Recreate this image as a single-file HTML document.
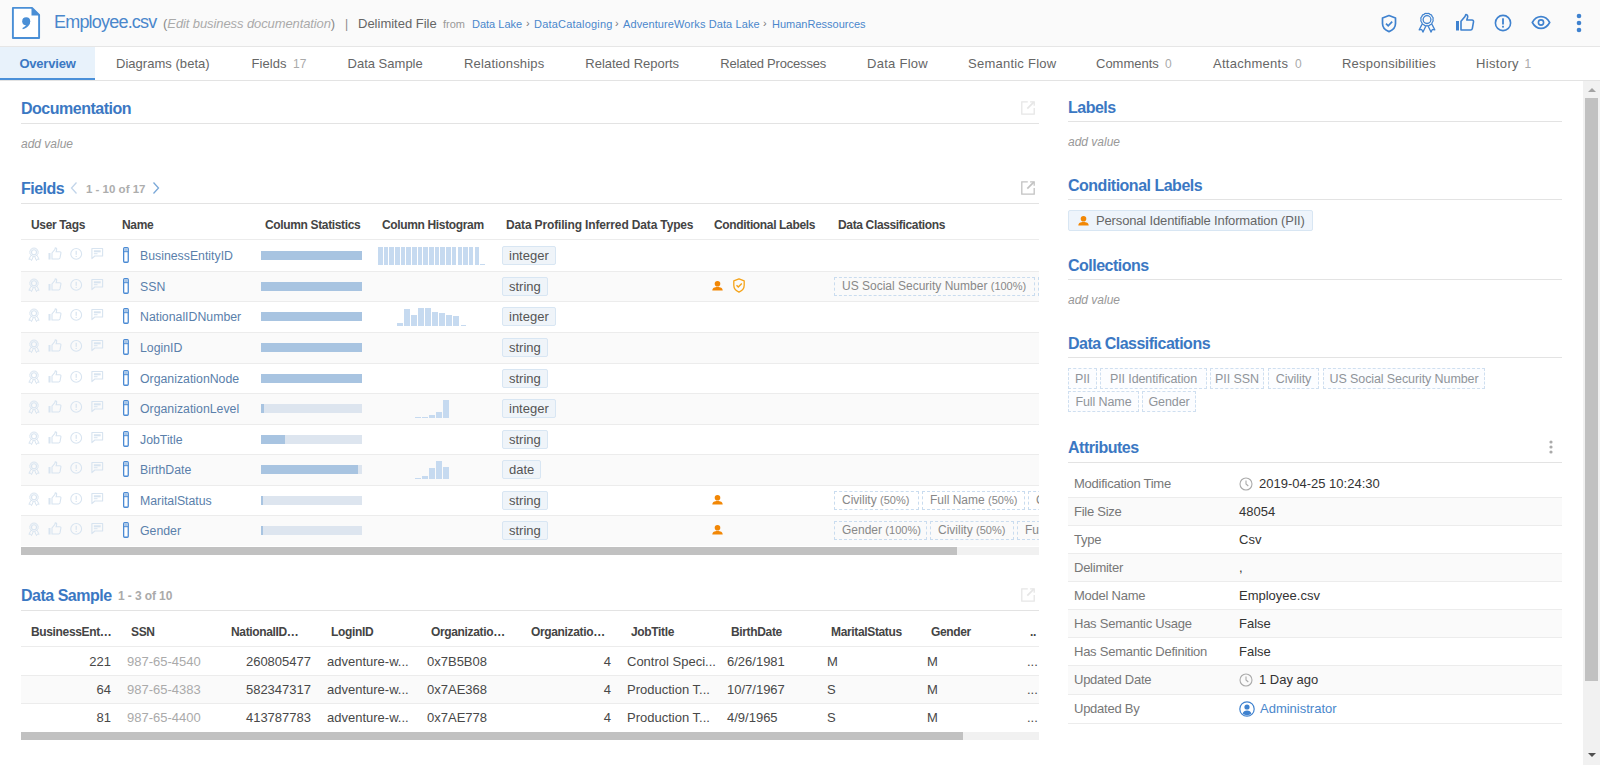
<!DOCTYPE html><html><head><meta charset="utf-8"><style>
html,body{margin:0;padding:0}
body{width:1600px;height:765px;overflow:hidden;position:relative;background:#fff;font-family:"Liberation Sans",sans-serif;color:#555}
.a{position:absolute;white-space:nowrap}
#hdr{position:absolute;left:0;top:0;width:1600px;height:46px;background:#fafafa;border-bottom:1px solid #e6e6e6}
#tabs{position:absolute;left:0;top:47px;width:1600px;height:33px;border-bottom:1px solid #e3e3e3;background:#fff}
.tab{position:absolute;top:0;height:33px;line-height:33px;font-size:13px;color:#666}
.tab .n{color:#aaa;margin-left:5px;font-size:12px}
.h2{position:absolute;font-weight:bold;font-size:16px;color:#3b78c3;letter-spacing:-0.5px;white-space:nowrap;line-height:18px}
.sep{position:absolute;height:1px;background:#e3e3e3}
.add{position:absolute;font-style:italic;font-size:12px;color:#999;line-height:14px}
.th{position:absolute;font-weight:bold;font-size:12px;color:#444;letter-spacing:-0.35px;white-space:nowrap;line-height:14px}
.row{position:absolute;left:21px;width:1018px;border-top:1px solid #ececec;box-sizing:border-box}
.g{background:#fafafa}
.nm{position:absolute;left:119px;font-size:12.3px;color:#5a80ab;line-height:14px}
.bar{position:absolute;left:240px;width:101px;height:9px;background:#dde5ef}
.bar i{position:absolute;left:0;top:0;height:9px;background:#a8c4e1}
.hb{position:absolute;background:#c6daf0}
.tp{position:absolute;left:481px;height:17px;line-height:17px;padding:0 6px;border:1px solid #d8e6f3;border-radius:2px;background:#eff4f9;font-size:13px;color:#555}
.dc{position:absolute;height:19px;line-height:17px;border:1px dashed #c9dcef;font-size:12px;color:#888;padding:0 0 0 7px;box-sizing:border-box;overflow:hidden}
.dc s{text-decoration:none;font-size:11px}
.ic{position:absolute}
.ds{position:absolute;font-size:13px;color:#484848;line-height:15px}
.dh{position:absolute;font-weight:bold;font-size:12px;color:#444;letter-spacing:-0.35px;line-height:14px}
.at{position:absolute;left:1068px;width:494px;border-bottom:1px solid #ececec;box-sizing:border-box}
.al{position:absolute;left:7px;font-size:13px;color:#777}
.av{position:absolute;left:171px;font-size:13px;color:#333}
.rb{position:absolute;height:20.5px;line-height:20px;border:1px dashed #cfdff0;background:#fcfdff;font-size:12.5px;color:#8f949a;padding:0;box-sizing:border-box;text-align:center;letter-spacing:-0.1px}
</style></head><body>
<div id="hdr">
  <svg class="a" style="left:11px;top:6px" width="31" height="35" viewBox="0 0 31 35">
    <path d="M1.9 1.9 H21 L28.1 9 V32 H1.9 Z" fill="#fff" stroke="#4a8fd6" stroke-width="1.9" stroke-linejoin="round"/>
    <path d="M20.5 1 L29 9.5 H20.5 Z" fill="#4a8fd6"/>
    <circle cx="15.2" cy="15.3" r="4" fill="#4a8fd6"/>
    <path d="M19.1 15.3 C19.1 19.6 16.2 22 11.8 23.2 L11.4 22.1 C14 21 15.3 19.5 15.5 17.6 Z" fill="#4a8fd6"/>
  </svg>
  <div class="a" style="left:54px;top:12px;font-size:18px;line-height:20px;color:#4a87cc;letter-spacing:-0.8px">Employee.csv</div>
  <div class="a" style="left:163px;top:16px;font-size:13px;line-height:16px;color:#888">(<i style="color:#aaa;letter-spacing:-0.1px">Edit business documentation</i>)</div>
  <div class="a" style="left:345px;top:16px;font-size:12px;line-height:16px;color:#888">|</div>
  <div class="a" style="left:358px;top:16px;font-size:13px;line-height:16px;color:#666">Delimited File</div>
  <div class="a" style="left:443px;top:17px;font-size:11px;line-height:14px;color:#999">from</div>
  <div class="a" style="left:472px;top:17px;font-size:11px;line-height:14px;color:#4a87cc">Data Lake</div>
  <div class="a" style="left:526px;top:16px;font-size:11px;line-height:14px;color:#777">›</div>
  <div class="a" style="left:534px;top:17px;font-size:11px;line-height:14px;color:#4a87cc;letter-spacing:0.2px">DataCataloging</div>
  <div class="a" style="left:615px;top:16px;font-size:11px;line-height:14px;color:#777">›</div>
  <div class="a" style="left:623px;top:17px;font-size:11px;line-height:14px;color:#4a87cc;letter-spacing:0.1px">AdventureWorks Data Lake</div>
  <div class="a" style="left:763px;top:16px;font-size:11px;line-height:14px;color:#777">›</div>
  <div class="a" style="left:772px;top:17px;font-size:11px;line-height:14px;color:#4a87cc">HumanRessources</div>


  <svg class="a" style="left:1380px;top:14px" width="18" height="19" viewBox="0 0 18 19"><path d="M9 1.5 L15.5 4 V9.5 C15.5 13.5 12.5 16.3 9 17.6 C5.5 16.3 2.5 13.5 2.5 9.5 V4 Z" fill="none" stroke="#3f82cf" stroke-width="1.7" stroke-linejoin="round"/><path d="M6 9.6 L8.2 11.8 L12.2 7.6" fill="none" stroke="#3f82cf" stroke-width="1.7"/></svg>
  <svg class="a" style="left:1418px;top:12px" width="18" height="22" viewBox="0 0 18 22"><path d="M9.00 1.60 Q10.81 0.84 12.00 2.40 Q13.95 2.65 14.20 4.60 Q15.76 5.79 15.00 7.60 Q15.76 9.41 14.20 10.60 Q13.95 12.55 12.00 12.80 Q10.81 14.36 9.00 13.60 Q7.19 14.36 6.00 12.80 Q4.05 12.55 3.80 10.60 Q2.24 9.41 3.00 7.60 Q2.24 5.79 3.80 4.60 Q4.05 2.65 6.00 2.40 Q7.19 0.84 9.00 1.60Z" fill="none" stroke="#3f82cf" stroke-width="1.25" stroke-linejoin="round"/><circle cx="9" cy="7.6" r="3.9" fill="none" stroke="#3f82cf" stroke-width="1.3"/><path d="M4 12.4 L1.2 17.9 L3.7 17.5 L4.9 20.1 L7.8 14.2 M14 12.4 L16.8 17.9 L14.3 17.5 L13.1 20.1 L10.2 14.2" fill="none" stroke="#3f82cf" stroke-width="1.25" stroke-linejoin="round"/></svg>
  <svg class="a" style="left:1455px;top:13px" width="20" height="19" viewBox="0 0 20 19"><rect x="1" y="8" width="3" height="9.5" fill="#3f82cf"/><path d="M6 17 V8.3 L10 3.5 L10.8 1.5 C12.3 1.5 13 2.8 12.6 4.3 L11.8 7 H17 C18 7 18.7 7.9 18.5 8.9 L17.3 15.6 C17.1 16.5 16.4 17 15.6 17 Z" fill="none" stroke="#3f82cf" stroke-width="1.6" stroke-linejoin="round"/></svg>
  <svg class="a" style="left:1494px;top:14px" width="18" height="18" viewBox="0 0 18 18"><circle cx="9" cy="9" r="7.6" fill="none" stroke="#3f82cf" stroke-width="1.6"/><rect x="8.1" y="4.3" width="1.8" height="6.2" fill="#3f82cf"/><rect x="8.1" y="11.8" width="1.8" height="1.8" fill="#3f82cf"/></svg>
  <svg class="a" style="left:1531px;top:15px" width="20" height="15" viewBox="0 0 20 15"><path d="M1.3 7.5 C3.5 3.5 6.5 1.6 10 1.6 C13.5 1.6 16.5 3.5 18.7 7.5 C16.5 11.5 13.5 13.4 10 13.4 C6.5 13.4 3.5 11.5 1.3 7.5 Z" fill="none" stroke="#3f82cf" stroke-width="1.6"/><circle cx="10" cy="7.5" r="2.6" fill="none" stroke="#3f82cf" stroke-width="1.6"/></svg>
  <svg class="a" style="left:1575px;top:13px" width="8" height="20" viewBox="0 0 8 20"><circle cx="4" cy="3" r="2.3" fill="#3f82cf"/><circle cx="4" cy="10" r="2.3" fill="#3f82cf"/><circle cx="4" cy="17" r="2.3" fill="#3f82cf"/></svg>
</div>
<div id="tabs"><div class="tab" style="left:0;width:95px;background:#e8f2fb;border-bottom:2px solid #4a90d9;height:31px;line-height:33px;text-align:center;font-weight:bold;color:#3b78c3;letter-spacing:-0.2px">Overview</div>
<div class="tab" style="left:116px;letter-spacing:0.03px">Diagrams (beta)</div>
<div class="tab" style="left:251.5px;letter-spacing:0.05px">Fields</div>
<div class="tab n" style="left:293px;top:1px;color:#aaa;font-size:12px">17</div>
<div class="tab" style="left:347.5px;letter-spacing:0.01px">Data Sample</div>
<div class="tab" style="left:464px;letter-spacing:0.18px">Relationships</div>
<div class="tab" style="left:585.3px;letter-spacing:-0.01px">Related Reports</div>
<div class="tab" style="left:720.3px;letter-spacing:-0.2px">Related Processes</div>
<div class="tab" style="left:867px;letter-spacing:0.28px">Data Flow</div>
<div class="tab" style="left:968px;letter-spacing:0.24px">Semantic Flow</div>
<div class="tab" style="left:1096px;letter-spacing:0px">Comments</div>
<div class="tab n" style="left:1165px;top:1px;color:#aaa;font-size:12px">0</div>
<div class="tab" style="left:1213px;letter-spacing:0.27px">Attachments</div>
<div class="tab n" style="left:1295px;top:1px;color:#aaa;font-size:12px">0</div>
<div class="tab" style="left:1342px;letter-spacing:0.23px">Responsibilities</div>
<div class="tab" style="left:1476px;letter-spacing:0.36px">History</div>
<div class="tab n" style="left:1524.5px;top:1px;color:#aaa;font-size:12px">1</div>
</div>
<div class="h2" style="left:21px;top:100px">Documentation</div>
<svg class="a" style="left:1020px;top:100px" width="16" height="16" viewBox="0 0 16 16"><path d="M7.8 1.8 H1.8 V14.1 H14.2 V8.1" fill="none" stroke="#e6e6e6" stroke-width="1.3"/><path d="M10.1 1.8 H14.2 V5.7" fill="none" stroke="#e6e6e6" stroke-width="1.3"/><path d="M7.3 8.6 L13.8 2.1" fill="none" stroke="#e6e6e6" stroke-width="1.7"/></svg>
<div class="sep" style="left:21px;top:123px;width:1018px"></div>
<div class="add" style="left:21px;top:136.5px">add value</div>
<div class="h2" style="left:21px;top:179.5px">Fields</div>
<svg class="a" style="left:69px;top:181px" width="10" height="14" viewBox="0 0 10 14"><path d="M7.5 1.5 L2.5 7 L7.5 12.5" fill="none" stroke="#c2d5ea" stroke-width="1.3"/></svg>
<div class="a" style="left:86px;top:183px;font-size:11.5px;line-height:13px;font-weight:bold;color:#adadad;letter-spacing:0px">1 - 10 of 17</div>
<svg class="a" style="left:151px;top:181px" width="10" height="14" viewBox="0 0 10 14"><path d="M2.5 1.5 L7.5 7 L2.5 12.5" fill="none" stroke="#7aa8d8" stroke-width="1.3"/></svg>
<svg class="a" style="left:1020px;top:180px" width="16" height="16" viewBox="0 0 16 16"><path d="M7.8 1.8 H1.8 V14.1 H14.2 V8.1" fill="none" stroke="#c2c2c2" stroke-width="1.3"/><path d="M10.1 1.8 H14.2 V5.7" fill="none" stroke="#c2c2c2" stroke-width="1.3"/><path d="M7.3 8.6 L13.8 2.1" fill="none" stroke="#c2c2c2" stroke-width="1.7"/></svg>
<div class="sep" style="left:21px;top:203px;width:1018px"></div>
<div class="th" style="left:31px;top:218px">User Tags</div>
<div class="th" style="left:122px;top:218px">Name</div>
<div class="th" style="left:265px;top:218px">Column Statistics</div>
<div class="th" style="left:382px;top:218px">Column Histogram</div>
<div class="th" style="left:506px;top:218px"><span style="letter-spacing:-0.15px">Data Profiling Inferred Data Types</span></div>
<div class="th" style="left:714px;top:218px">Conditional Labels</div>
<div class="th" style="left:838px;top:218px">Data Classifications</div>
<div class="a" style="left:21px;top:239px;width:1018px;height:316px;overflow:hidden">
<div class="row" style="left:0;top:0px;height:32px">
</div>

<div class="nm" style="top:10.0px">BusinessEntityID</div>
<div class="bar" style="top:12.0px"><i style="width:101px"></i></div>
<div class="hb" style="left:357.00px;top:8.0px;width:4.5px;height:18px"></div>
<div class="hb" style="left:362.68px;top:8.0px;width:4.5px;height:18px"></div>
<div class="hb" style="left:368.36px;top:8.0px;width:4.5px;height:18px"></div>
<div class="hb" style="left:374.04px;top:8.0px;width:4.5px;height:18px"></div>
<div class="hb" style="left:379.72px;top:8.0px;width:4.5px;height:18px"></div>
<div class="hb" style="left:385.40px;top:8.0px;width:4.5px;height:18px"></div>
<div class="hb" style="left:391.08px;top:8.0px;width:4.5px;height:18px"></div>
<div class="hb" style="left:396.76px;top:8.0px;width:4.5px;height:18px"></div>
<div class="hb" style="left:402.44px;top:8.0px;width:4.5px;height:18px"></div>
<div class="hb" style="left:408.12px;top:8.0px;width:4.5px;height:18px"></div>
<div class="hb" style="left:413.80px;top:8.0px;width:4.5px;height:18px"></div>
<div class="hb" style="left:419.48px;top:8.0px;width:4.5px;height:18px"></div>
<div class="hb" style="left:425.16px;top:8.0px;width:4.5px;height:18px"></div>
<div class="hb" style="left:430.84px;top:8.0px;width:4.5px;height:18px"></div>
<div class="hb" style="left:436.52px;top:8.0px;width:4.5px;height:18px"></div>
<div class="hb" style="left:442.20px;top:8.0px;width:4.5px;height:18px"></div>
<div class="hb" style="left:447.88px;top:8.0px;width:4.5px;height:18px"></div>
<div class="hb" style="left:453.56px;top:8.0px;width:4.5px;height:18px"></div>
<div class="hb" style="left:459.24px;top:24.5px;width:5px;height:1.5px"></div>
<div class="tp" style="top:7.0px">integer</div>
<div class="row g" style="left:0;top:32px;height:30px">
</div>

<div class="nm" style="top:40.5px">SSN</div>
<div class="bar" style="top:42.5px"><i style="width:101px"></i></div>
<div class="tp" style="top:37.5px">string</div>
<svg class="a" style="left:691px;top:41.5px" width="11" height="10" viewBox="0 0 11 10"><circle cx="5.5" cy="2.8" r="2.8" fill="#f28705"/><path d="M0.3 9.5 C0.3 6.8 2.5 5.9 5.5 5.9 C8.5 5.9 10.7 6.8 10.7 9.5 Z" fill="#f28705"/></svg>
<svg class="a" style="left:712px;top:39.0px" width="12" height="15" viewBox="0 0 12 15"><path d="M6 0.8 L11.2 2.8 V7.3 C11.2 10.6 8.9 12.9 6 14.2 C3.1 12.9 0.8 10.6 0.8 7.3 V2.8 Z" fill="none" stroke="#f5a318" stroke-width="1.3" stroke-linejoin="round"/><path d="M3.5 7.3 L5.3 9.1 L8.8 5.4" fill="none" stroke="#f5a318" stroke-width="1.4"/></svg>
<div class="dc" style="left:813px;top:37.5px;width:201px">US Social Security Number <s>(100%)</s></div>
<div class="dc" style="left:1017px;top:37.5px;width:82px">PII SSN <s>(100%)</s></div>
<div class="row" style="left:0;top:62px;height:31px">
</div>

<div class="nm" style="top:71.0px">NationalIDNumber</div>
<div class="bar" style="top:73.0px"><i style="width:101px"></i></div>
<div class="hb" style="left:376.00px;top:84.3px;width:5.9px;height:2.7px"></div>
<div class="hb" style="left:383.06px;top:70.3px;width:5.9px;height:16.7px"></div>
<div class="hb" style="left:390.12px;top:76.2px;width:5.9px;height:10.8px"></div>
<div class="hb" style="left:397.18px;top:69.3px;width:5.9px;height:17.7px"></div>
<div class="hb" style="left:404.24px;top:69.3px;width:5.9px;height:17.7px"></div>
<div class="hb" style="left:411.30px;top:73.2px;width:5.9px;height:13.8px"></div>
<div class="hb" style="left:418.36px;top:74.2px;width:5.9px;height:12.8px"></div>
<div class="hb" style="left:425.42px;top:76.2px;width:5.9px;height:10.8px"></div>
<div class="hb" style="left:432.48px;top:77.2px;width:5.9px;height:9.75px"></div>
<div class="hb" style="left:439.54px;top:86.0px;width:5.9px;height:1px"></div>
<div class="tp" style="top:68.0px">integer</div>
<div class="row g" style="left:0;top:93px;height:31px">
</div>

<div class="nm" style="top:102.0px">LoginID</div>
<div class="bar" style="top:104.0px"><i style="width:101px"></i></div>
<div class="tp" style="top:99.0px">string</div>
<div class="row" style="left:0;top:124px;height:30px">
</div>

<div class="nm" style="top:132.5px">OrganizationNode</div>
<div class="bar" style="top:134.5px"><i style="width:101px"></i></div>
<div class="tp" style="top:129.5px">string</div>
<div class="row g" style="left:0;top:154px;height:31px">
</div>

<div class="nm" style="top:163.0px">OrganizationLevel</div>
<div class="bar" style="top:165.0px"><i style="width:3px"></i></div>
<div class="hb" style="left:394.00px;top:178.0px;width:5.9px;height:1px"></div>
<div class="hb" style="left:401.00px;top:178.0px;width:5.9px;height:1px"></div>
<div class="hb" style="left:408.00px;top:176.0px;width:5.9px;height:3px"></div>
<div class="hb" style="left:415.00px;top:173.0px;width:5.9px;height:6px"></div>
<div class="hb" style="left:422.00px;top:161.0px;width:5.9px;height:18px"></div>
<div class="tp" style="top:160.0px">integer</div>
<div class="row" style="left:0;top:185px;height:30px">
</div>

<div class="nm" style="top:193.5px">JobTitle</div>
<div class="bar" style="top:195.5px"><i style="width:24px"></i></div>
<div class="tp" style="top:190.5px">string</div>
<div class="row g" style="left:0;top:215px;height:31px">
</div>

<div class="nm" style="top:224.0px">BirthDate</div>
<div class="bar" style="top:226.0px"><i style="width:97px"></i></div>
<div class="hb" style="left:394.00px;top:239.0px;width:5.9px;height:1px"></div>
<div class="hb" style="left:401.00px;top:237.0px;width:5.9px;height:3px"></div>
<div class="hb" style="left:408.00px;top:229.0px;width:5.9px;height:11px"></div>
<div class="hb" style="left:415.00px;top:222.0px;width:5.9px;height:18px"></div>
<div class="hb" style="left:422.00px;top:228.0px;width:5.9px;height:12px"></div>
<div class="tp" style="top:221.0px">date</div>
<div class="row" style="left:0;top:246px;height:30px">
</div>

<div class="nm" style="top:254.5px">MaritalStatus</div>
<div class="bar" style="top:256.5px"><i style="width:2px"></i></div>
<div class="tp" style="top:251.5px">string</div>
<svg class="a" style="left:691px;top:255.5px" width="11" height="10" viewBox="0 0 11 10"><circle cx="5.5" cy="2.8" r="2.8" fill="#f28705"/><path d="M0.3 9.5 C0.3 6.8 2.5 5.9 5.5 5.9 C8.5 5.9 10.7 6.8 10.7 9.5 Z" fill="#f28705"/></svg>
<div class="dc" style="left:813px;top:251.5px;width:85px">Civility <s>(50%)</s></div>
<div class="dc" style="left:901px;top:251.5px;width:103px">Full Name <s>(50%)</s></div>
<div class="dc" style="left:1007px;top:251.5px;width:85px">Civility <s>(50%)</s></div>
<div class="row g" style="left:0;top:276px;height:31px">
</div>

<div class="nm" style="top:285.0px">Gender</div>
<div class="bar" style="top:287.0px"><i style="width:2px"></i></div>
<div class="tp" style="top:282.0px">string</div>
<svg class="a" style="left:691px;top:286.0px" width="11" height="10" viewBox="0 0 11 10"><circle cx="5.5" cy="2.8" r="2.8" fill="#f28705"/><path d="M0.3 9.5 C0.3 6.8 2.5 5.9 5.5 5.9 C8.5 5.9 10.7 6.8 10.7 9.5 Z" fill="#f28705"/></svg>
<div class="dc" style="left:813px;top:282.0px;width:93px">Gender <s>(100%)</s></div>
<div class="dc" style="left:909px;top:282.0px;width:84px">Civility <s>(50%)</s></div>
<div class="dc" style="left:996px;top:282.0px;width:103px">Full Name <s>(50%)</s></div>
</div>
<svg class="a" style="left:28px;top:247.1px" width="12" height="14" viewBox="0 0 12 14"><path d="M6.00 1.20 Q7.22 0.66 8.00 1.74 Q9.32 1.88 9.46 3.20 Q10.54 3.98 10.00 5.20 Q10.54 6.42 9.46 7.20 Q9.32 8.52 8.00 8.66 Q7.22 9.74 6.00 9.20 Q4.78 9.74 4.00 8.66 Q2.68 8.52 2.54 7.20 Q1.46 6.42 2.00 5.20 Q1.46 3.98 2.54 3.20 Q2.68 1.88 4.00 1.74 Q4.78 0.66 6.00 1.20Z" fill="none" stroke="#d8e4f0" stroke-width="1"/><circle cx="6" cy="5.2" r="2.5" fill="none" stroke="#d8e4f0" stroke-width="1.1"/><path d="M2.9 8.4 L0.9 12.3 L2.6 12 L3.5 13.6 L5.3 9.6 M9.1 8.4 L11.1 12.3 L9.4 12 L8.5 13.6 L6.7 9.6" fill="none" stroke="#d8e4f0" stroke-width="1" stroke-linejoin="round"/></svg><svg class="a" style="left:48px;top:247.1px" width="14" height="13" viewBox="0 0 14 13"><rect x="0.5" y="6" width="2" height="6.5" fill="#d8e4f0"/><path d="M4 12 V6 L6.8 2.6 L7.3 0.8 C8.4 0.8 8.9 1.7 8.6 2.8 L8.1 4.8 H11.8 C12.6 4.8 13.1 5.4 12.9 6.2 L12 10.9 C11.8 11.6 11.3 12 10.7 12 Z" fill="none" stroke="#d8e4f0" stroke-width="1.1"/></svg><svg class="a" style="left:70px;top:247.1px" width="13" height="13" viewBox="0 0 13 13"><circle cx="6.2" cy="6.9" r="5.4" fill="none" stroke="#d8e4f0" stroke-width="1.1"/><rect x="5.6" y="3.8" width="1.2" height="4" fill="#d8e4f0"/><rect x="5.6" y="8.9" width="1.2" height="1.1" fill="#d8e4f0"/></svg><svg class="a" style="left:91px;top:247.1px" width="13" height="13" viewBox="0 0 13 13"><path d="M0.9 1.5 H11.6 V9 H3.8 L0.9 11.6 Z" fill="none" stroke="#d8e4f0" stroke-width="1.1" stroke-linejoin="round"/><rect x="2.9" y="3.3" width="6.8" height="2" fill="#d8e4f0"/><rect x="2.9" y="6.2" width="3.6" height="1" fill="#d8e4f0"/></svg>
<svg class="a" style="left:123px;top:247.0px" width="7" height="17" viewBox="0 0 7 17"><rect x="0.65" y="0.65" width="4.6" height="14.6" rx="1" fill="#fff" stroke="#4a8ad4" stroke-width="1.3"/><rect x="1.2" y="1.2" width="3.5" height="3.1" fill="#a9c6e6"/><path d="M0.65 4.7 H5.25" stroke="#4a8ad4" stroke-width="1"/></svg>
<svg class="a" style="left:28px;top:277.6px" width="12" height="14" viewBox="0 0 12 14"><path d="M6.00 1.20 Q7.22 0.66 8.00 1.74 Q9.32 1.88 9.46 3.20 Q10.54 3.98 10.00 5.20 Q10.54 6.42 9.46 7.20 Q9.32 8.52 8.00 8.66 Q7.22 9.74 6.00 9.20 Q4.78 9.74 4.00 8.66 Q2.68 8.52 2.54 7.20 Q1.46 6.42 2.00 5.20 Q1.46 3.98 2.54 3.20 Q2.68 1.88 4.00 1.74 Q4.78 0.66 6.00 1.20Z" fill="none" stroke="#d8e4f0" stroke-width="1"/><circle cx="6" cy="5.2" r="2.5" fill="none" stroke="#d8e4f0" stroke-width="1.1"/><path d="M2.9 8.4 L0.9 12.3 L2.6 12 L3.5 13.6 L5.3 9.6 M9.1 8.4 L11.1 12.3 L9.4 12 L8.5 13.6 L6.7 9.6" fill="none" stroke="#d8e4f0" stroke-width="1" stroke-linejoin="round"/></svg><svg class="a" style="left:48px;top:277.6px" width="14" height="13" viewBox="0 0 14 13"><rect x="0.5" y="6" width="2" height="6.5" fill="#d8e4f0"/><path d="M4 12 V6 L6.8 2.6 L7.3 0.8 C8.4 0.8 8.9 1.7 8.6 2.8 L8.1 4.8 H11.8 C12.6 4.8 13.1 5.4 12.9 6.2 L12 10.9 C11.8 11.6 11.3 12 10.7 12 Z" fill="none" stroke="#d8e4f0" stroke-width="1.1"/></svg><svg class="a" style="left:70px;top:277.6px" width="13" height="13" viewBox="0 0 13 13"><circle cx="6.2" cy="6.9" r="5.4" fill="none" stroke="#d8e4f0" stroke-width="1.1"/><rect x="5.6" y="3.8" width="1.2" height="4" fill="#d8e4f0"/><rect x="5.6" y="8.9" width="1.2" height="1.1" fill="#d8e4f0"/></svg><svg class="a" style="left:91px;top:277.6px" width="13" height="13" viewBox="0 0 13 13"><path d="M0.9 1.5 H11.6 V9 H3.8 L0.9 11.6 Z" fill="none" stroke="#d8e4f0" stroke-width="1.1" stroke-linejoin="round"/><rect x="2.9" y="3.3" width="6.8" height="2" fill="#d8e4f0"/><rect x="2.9" y="6.2" width="3.6" height="1" fill="#d8e4f0"/></svg>
<svg class="a" style="left:123px;top:277.5px" width="7" height="17" viewBox="0 0 7 17"><rect x="0.65" y="0.65" width="4.6" height="14.6" rx="1" fill="#fff" stroke="#4a8ad4" stroke-width="1.3"/><rect x="1.2" y="1.2" width="3.5" height="3.1" fill="#a9c6e6"/><path d="M0.65 4.7 H5.25" stroke="#4a8ad4" stroke-width="1"/></svg>
<svg class="a" style="left:28px;top:308.1px" width="12" height="14" viewBox="0 0 12 14"><path d="M6.00 1.20 Q7.22 0.66 8.00 1.74 Q9.32 1.88 9.46 3.20 Q10.54 3.98 10.00 5.20 Q10.54 6.42 9.46 7.20 Q9.32 8.52 8.00 8.66 Q7.22 9.74 6.00 9.20 Q4.78 9.74 4.00 8.66 Q2.68 8.52 2.54 7.20 Q1.46 6.42 2.00 5.20 Q1.46 3.98 2.54 3.20 Q2.68 1.88 4.00 1.74 Q4.78 0.66 6.00 1.20Z" fill="none" stroke="#d8e4f0" stroke-width="1"/><circle cx="6" cy="5.2" r="2.5" fill="none" stroke="#d8e4f0" stroke-width="1.1"/><path d="M2.9 8.4 L0.9 12.3 L2.6 12 L3.5 13.6 L5.3 9.6 M9.1 8.4 L11.1 12.3 L9.4 12 L8.5 13.6 L6.7 9.6" fill="none" stroke="#d8e4f0" stroke-width="1" stroke-linejoin="round"/></svg><svg class="a" style="left:48px;top:308.1px" width="14" height="13" viewBox="0 0 14 13"><rect x="0.5" y="6" width="2" height="6.5" fill="#d8e4f0"/><path d="M4 12 V6 L6.8 2.6 L7.3 0.8 C8.4 0.8 8.9 1.7 8.6 2.8 L8.1 4.8 H11.8 C12.6 4.8 13.1 5.4 12.9 6.2 L12 10.9 C11.8 11.6 11.3 12 10.7 12 Z" fill="none" stroke="#d8e4f0" stroke-width="1.1"/></svg><svg class="a" style="left:70px;top:308.1px" width="13" height="13" viewBox="0 0 13 13"><circle cx="6.2" cy="6.9" r="5.4" fill="none" stroke="#d8e4f0" stroke-width="1.1"/><rect x="5.6" y="3.8" width="1.2" height="4" fill="#d8e4f0"/><rect x="5.6" y="8.9" width="1.2" height="1.1" fill="#d8e4f0"/></svg><svg class="a" style="left:91px;top:308.1px" width="13" height="13" viewBox="0 0 13 13"><path d="M0.9 1.5 H11.6 V9 H3.8 L0.9 11.6 Z" fill="none" stroke="#d8e4f0" stroke-width="1.1" stroke-linejoin="round"/><rect x="2.9" y="3.3" width="6.8" height="2" fill="#d8e4f0"/><rect x="2.9" y="6.2" width="3.6" height="1" fill="#d8e4f0"/></svg>
<svg class="a" style="left:123px;top:308.0px" width="7" height="17" viewBox="0 0 7 17"><rect x="0.65" y="0.65" width="4.6" height="14.6" rx="1" fill="#fff" stroke="#4a8ad4" stroke-width="1.3"/><rect x="1.2" y="1.2" width="3.5" height="3.1" fill="#a9c6e6"/><path d="M0.65 4.7 H5.25" stroke="#4a8ad4" stroke-width="1"/></svg>
<svg class="a" style="left:28px;top:339.1px" width="12" height="14" viewBox="0 0 12 14"><path d="M6.00 1.20 Q7.22 0.66 8.00 1.74 Q9.32 1.88 9.46 3.20 Q10.54 3.98 10.00 5.20 Q10.54 6.42 9.46 7.20 Q9.32 8.52 8.00 8.66 Q7.22 9.74 6.00 9.20 Q4.78 9.74 4.00 8.66 Q2.68 8.52 2.54 7.20 Q1.46 6.42 2.00 5.20 Q1.46 3.98 2.54 3.20 Q2.68 1.88 4.00 1.74 Q4.78 0.66 6.00 1.20Z" fill="none" stroke="#d8e4f0" stroke-width="1"/><circle cx="6" cy="5.2" r="2.5" fill="none" stroke="#d8e4f0" stroke-width="1.1"/><path d="M2.9 8.4 L0.9 12.3 L2.6 12 L3.5 13.6 L5.3 9.6 M9.1 8.4 L11.1 12.3 L9.4 12 L8.5 13.6 L6.7 9.6" fill="none" stroke="#d8e4f0" stroke-width="1" stroke-linejoin="round"/></svg><svg class="a" style="left:48px;top:339.1px" width="14" height="13" viewBox="0 0 14 13"><rect x="0.5" y="6" width="2" height="6.5" fill="#d8e4f0"/><path d="M4 12 V6 L6.8 2.6 L7.3 0.8 C8.4 0.8 8.9 1.7 8.6 2.8 L8.1 4.8 H11.8 C12.6 4.8 13.1 5.4 12.9 6.2 L12 10.9 C11.8 11.6 11.3 12 10.7 12 Z" fill="none" stroke="#d8e4f0" stroke-width="1.1"/></svg><svg class="a" style="left:70px;top:339.1px" width="13" height="13" viewBox="0 0 13 13"><circle cx="6.2" cy="6.9" r="5.4" fill="none" stroke="#d8e4f0" stroke-width="1.1"/><rect x="5.6" y="3.8" width="1.2" height="4" fill="#d8e4f0"/><rect x="5.6" y="8.9" width="1.2" height="1.1" fill="#d8e4f0"/></svg><svg class="a" style="left:91px;top:339.1px" width="13" height="13" viewBox="0 0 13 13"><path d="M0.9 1.5 H11.6 V9 H3.8 L0.9 11.6 Z" fill="none" stroke="#d8e4f0" stroke-width="1.1" stroke-linejoin="round"/><rect x="2.9" y="3.3" width="6.8" height="2" fill="#d8e4f0"/><rect x="2.9" y="6.2" width="3.6" height="1" fill="#d8e4f0"/></svg>
<svg class="a" style="left:123px;top:339.0px" width="7" height="17" viewBox="0 0 7 17"><rect x="0.65" y="0.65" width="4.6" height="14.6" rx="1" fill="#fff" stroke="#4a8ad4" stroke-width="1.3"/><rect x="1.2" y="1.2" width="3.5" height="3.1" fill="#a9c6e6"/><path d="M0.65 4.7 H5.25" stroke="#4a8ad4" stroke-width="1"/></svg>
<svg class="a" style="left:28px;top:369.6px" width="12" height="14" viewBox="0 0 12 14"><path d="M6.00 1.20 Q7.22 0.66 8.00 1.74 Q9.32 1.88 9.46 3.20 Q10.54 3.98 10.00 5.20 Q10.54 6.42 9.46 7.20 Q9.32 8.52 8.00 8.66 Q7.22 9.74 6.00 9.20 Q4.78 9.74 4.00 8.66 Q2.68 8.52 2.54 7.20 Q1.46 6.42 2.00 5.20 Q1.46 3.98 2.54 3.20 Q2.68 1.88 4.00 1.74 Q4.78 0.66 6.00 1.20Z" fill="none" stroke="#d8e4f0" stroke-width="1"/><circle cx="6" cy="5.2" r="2.5" fill="none" stroke="#d8e4f0" stroke-width="1.1"/><path d="M2.9 8.4 L0.9 12.3 L2.6 12 L3.5 13.6 L5.3 9.6 M9.1 8.4 L11.1 12.3 L9.4 12 L8.5 13.6 L6.7 9.6" fill="none" stroke="#d8e4f0" stroke-width="1" stroke-linejoin="round"/></svg><svg class="a" style="left:48px;top:369.6px" width="14" height="13" viewBox="0 0 14 13"><rect x="0.5" y="6" width="2" height="6.5" fill="#d8e4f0"/><path d="M4 12 V6 L6.8 2.6 L7.3 0.8 C8.4 0.8 8.9 1.7 8.6 2.8 L8.1 4.8 H11.8 C12.6 4.8 13.1 5.4 12.9 6.2 L12 10.9 C11.8 11.6 11.3 12 10.7 12 Z" fill="none" stroke="#d8e4f0" stroke-width="1.1"/></svg><svg class="a" style="left:70px;top:369.6px" width="13" height="13" viewBox="0 0 13 13"><circle cx="6.2" cy="6.9" r="5.4" fill="none" stroke="#d8e4f0" stroke-width="1.1"/><rect x="5.6" y="3.8" width="1.2" height="4" fill="#d8e4f0"/><rect x="5.6" y="8.9" width="1.2" height="1.1" fill="#d8e4f0"/></svg><svg class="a" style="left:91px;top:369.6px" width="13" height="13" viewBox="0 0 13 13"><path d="M0.9 1.5 H11.6 V9 H3.8 L0.9 11.6 Z" fill="none" stroke="#d8e4f0" stroke-width="1.1" stroke-linejoin="round"/><rect x="2.9" y="3.3" width="6.8" height="2" fill="#d8e4f0"/><rect x="2.9" y="6.2" width="3.6" height="1" fill="#d8e4f0"/></svg>
<svg class="a" style="left:123px;top:369.5px" width="7" height="17" viewBox="0 0 7 17"><rect x="0.65" y="0.65" width="4.6" height="14.6" rx="1" fill="#fff" stroke="#4a8ad4" stroke-width="1.3"/><rect x="1.2" y="1.2" width="3.5" height="3.1" fill="#a9c6e6"/><path d="M0.65 4.7 H5.25" stroke="#4a8ad4" stroke-width="1"/></svg>
<svg class="a" style="left:28px;top:400.1px" width="12" height="14" viewBox="0 0 12 14"><path d="M6.00 1.20 Q7.22 0.66 8.00 1.74 Q9.32 1.88 9.46 3.20 Q10.54 3.98 10.00 5.20 Q10.54 6.42 9.46 7.20 Q9.32 8.52 8.00 8.66 Q7.22 9.74 6.00 9.20 Q4.78 9.74 4.00 8.66 Q2.68 8.52 2.54 7.20 Q1.46 6.42 2.00 5.20 Q1.46 3.98 2.54 3.20 Q2.68 1.88 4.00 1.74 Q4.78 0.66 6.00 1.20Z" fill="none" stroke="#d8e4f0" stroke-width="1"/><circle cx="6" cy="5.2" r="2.5" fill="none" stroke="#d8e4f0" stroke-width="1.1"/><path d="M2.9 8.4 L0.9 12.3 L2.6 12 L3.5 13.6 L5.3 9.6 M9.1 8.4 L11.1 12.3 L9.4 12 L8.5 13.6 L6.7 9.6" fill="none" stroke="#d8e4f0" stroke-width="1" stroke-linejoin="round"/></svg><svg class="a" style="left:48px;top:400.1px" width="14" height="13" viewBox="0 0 14 13"><rect x="0.5" y="6" width="2" height="6.5" fill="#d8e4f0"/><path d="M4 12 V6 L6.8 2.6 L7.3 0.8 C8.4 0.8 8.9 1.7 8.6 2.8 L8.1 4.8 H11.8 C12.6 4.8 13.1 5.4 12.9 6.2 L12 10.9 C11.8 11.6 11.3 12 10.7 12 Z" fill="none" stroke="#d8e4f0" stroke-width="1.1"/></svg><svg class="a" style="left:70px;top:400.1px" width="13" height="13" viewBox="0 0 13 13"><circle cx="6.2" cy="6.9" r="5.4" fill="none" stroke="#d8e4f0" stroke-width="1.1"/><rect x="5.6" y="3.8" width="1.2" height="4" fill="#d8e4f0"/><rect x="5.6" y="8.9" width="1.2" height="1.1" fill="#d8e4f0"/></svg><svg class="a" style="left:91px;top:400.1px" width="13" height="13" viewBox="0 0 13 13"><path d="M0.9 1.5 H11.6 V9 H3.8 L0.9 11.6 Z" fill="none" stroke="#d8e4f0" stroke-width="1.1" stroke-linejoin="round"/><rect x="2.9" y="3.3" width="6.8" height="2" fill="#d8e4f0"/><rect x="2.9" y="6.2" width="3.6" height="1" fill="#d8e4f0"/></svg>
<svg class="a" style="left:123px;top:400.0px" width="7" height="17" viewBox="0 0 7 17"><rect x="0.65" y="0.65" width="4.6" height="14.6" rx="1" fill="#fff" stroke="#4a8ad4" stroke-width="1.3"/><rect x="1.2" y="1.2" width="3.5" height="3.1" fill="#a9c6e6"/><path d="M0.65 4.7 H5.25" stroke="#4a8ad4" stroke-width="1"/></svg>
<svg class="a" style="left:28px;top:430.6px" width="12" height="14" viewBox="0 0 12 14"><path d="M6.00 1.20 Q7.22 0.66 8.00 1.74 Q9.32 1.88 9.46 3.20 Q10.54 3.98 10.00 5.20 Q10.54 6.42 9.46 7.20 Q9.32 8.52 8.00 8.66 Q7.22 9.74 6.00 9.20 Q4.78 9.74 4.00 8.66 Q2.68 8.52 2.54 7.20 Q1.46 6.42 2.00 5.20 Q1.46 3.98 2.54 3.20 Q2.68 1.88 4.00 1.74 Q4.78 0.66 6.00 1.20Z" fill="none" stroke="#d8e4f0" stroke-width="1"/><circle cx="6" cy="5.2" r="2.5" fill="none" stroke="#d8e4f0" stroke-width="1.1"/><path d="M2.9 8.4 L0.9 12.3 L2.6 12 L3.5 13.6 L5.3 9.6 M9.1 8.4 L11.1 12.3 L9.4 12 L8.5 13.6 L6.7 9.6" fill="none" stroke="#d8e4f0" stroke-width="1" stroke-linejoin="round"/></svg><svg class="a" style="left:48px;top:430.6px" width="14" height="13" viewBox="0 0 14 13"><rect x="0.5" y="6" width="2" height="6.5" fill="#d8e4f0"/><path d="M4 12 V6 L6.8 2.6 L7.3 0.8 C8.4 0.8 8.9 1.7 8.6 2.8 L8.1 4.8 H11.8 C12.6 4.8 13.1 5.4 12.9 6.2 L12 10.9 C11.8 11.6 11.3 12 10.7 12 Z" fill="none" stroke="#d8e4f0" stroke-width="1.1"/></svg><svg class="a" style="left:70px;top:430.6px" width="13" height="13" viewBox="0 0 13 13"><circle cx="6.2" cy="6.9" r="5.4" fill="none" stroke="#d8e4f0" stroke-width="1.1"/><rect x="5.6" y="3.8" width="1.2" height="4" fill="#d8e4f0"/><rect x="5.6" y="8.9" width="1.2" height="1.1" fill="#d8e4f0"/></svg><svg class="a" style="left:91px;top:430.6px" width="13" height="13" viewBox="0 0 13 13"><path d="M0.9 1.5 H11.6 V9 H3.8 L0.9 11.6 Z" fill="none" stroke="#d8e4f0" stroke-width="1.1" stroke-linejoin="round"/><rect x="2.9" y="3.3" width="6.8" height="2" fill="#d8e4f0"/><rect x="2.9" y="6.2" width="3.6" height="1" fill="#d8e4f0"/></svg>
<svg class="a" style="left:123px;top:430.5px" width="7" height="17" viewBox="0 0 7 17"><rect x="0.65" y="0.65" width="4.6" height="14.6" rx="1" fill="#fff" stroke="#4a8ad4" stroke-width="1.3"/><rect x="1.2" y="1.2" width="3.5" height="3.1" fill="#a9c6e6"/><path d="M0.65 4.7 H5.25" stroke="#4a8ad4" stroke-width="1"/></svg>
<svg class="a" style="left:28px;top:461.1px" width="12" height="14" viewBox="0 0 12 14"><path d="M6.00 1.20 Q7.22 0.66 8.00 1.74 Q9.32 1.88 9.46 3.20 Q10.54 3.98 10.00 5.20 Q10.54 6.42 9.46 7.20 Q9.32 8.52 8.00 8.66 Q7.22 9.74 6.00 9.20 Q4.78 9.74 4.00 8.66 Q2.68 8.52 2.54 7.20 Q1.46 6.42 2.00 5.20 Q1.46 3.98 2.54 3.20 Q2.68 1.88 4.00 1.74 Q4.78 0.66 6.00 1.20Z" fill="none" stroke="#d8e4f0" stroke-width="1"/><circle cx="6" cy="5.2" r="2.5" fill="none" stroke="#d8e4f0" stroke-width="1.1"/><path d="M2.9 8.4 L0.9 12.3 L2.6 12 L3.5 13.6 L5.3 9.6 M9.1 8.4 L11.1 12.3 L9.4 12 L8.5 13.6 L6.7 9.6" fill="none" stroke="#d8e4f0" stroke-width="1" stroke-linejoin="round"/></svg><svg class="a" style="left:48px;top:461.1px" width="14" height="13" viewBox="0 0 14 13"><rect x="0.5" y="6" width="2" height="6.5" fill="#d8e4f0"/><path d="M4 12 V6 L6.8 2.6 L7.3 0.8 C8.4 0.8 8.9 1.7 8.6 2.8 L8.1 4.8 H11.8 C12.6 4.8 13.1 5.4 12.9 6.2 L12 10.9 C11.8 11.6 11.3 12 10.7 12 Z" fill="none" stroke="#d8e4f0" stroke-width="1.1"/></svg><svg class="a" style="left:70px;top:461.1px" width="13" height="13" viewBox="0 0 13 13"><circle cx="6.2" cy="6.9" r="5.4" fill="none" stroke="#d8e4f0" stroke-width="1.1"/><rect x="5.6" y="3.8" width="1.2" height="4" fill="#d8e4f0"/><rect x="5.6" y="8.9" width="1.2" height="1.1" fill="#d8e4f0"/></svg><svg class="a" style="left:91px;top:461.1px" width="13" height="13" viewBox="0 0 13 13"><path d="M0.9 1.5 H11.6 V9 H3.8 L0.9 11.6 Z" fill="none" stroke="#d8e4f0" stroke-width="1.1" stroke-linejoin="round"/><rect x="2.9" y="3.3" width="6.8" height="2" fill="#d8e4f0"/><rect x="2.9" y="6.2" width="3.6" height="1" fill="#d8e4f0"/></svg>
<svg class="a" style="left:123px;top:461.0px" width="7" height="17" viewBox="0 0 7 17"><rect x="0.65" y="0.65" width="4.6" height="14.6" rx="1" fill="#fff" stroke="#4a8ad4" stroke-width="1.3"/><rect x="1.2" y="1.2" width="3.5" height="3.1" fill="#a9c6e6"/><path d="M0.65 4.7 H5.25" stroke="#4a8ad4" stroke-width="1"/></svg>
<svg class="a" style="left:28px;top:491.6px" width="12" height="14" viewBox="0 0 12 14"><path d="M6.00 1.20 Q7.22 0.66 8.00 1.74 Q9.32 1.88 9.46 3.20 Q10.54 3.98 10.00 5.20 Q10.54 6.42 9.46 7.20 Q9.32 8.52 8.00 8.66 Q7.22 9.74 6.00 9.20 Q4.78 9.74 4.00 8.66 Q2.68 8.52 2.54 7.20 Q1.46 6.42 2.00 5.20 Q1.46 3.98 2.54 3.20 Q2.68 1.88 4.00 1.74 Q4.78 0.66 6.00 1.20Z" fill="none" stroke="#d8e4f0" stroke-width="1"/><circle cx="6" cy="5.2" r="2.5" fill="none" stroke="#d8e4f0" stroke-width="1.1"/><path d="M2.9 8.4 L0.9 12.3 L2.6 12 L3.5 13.6 L5.3 9.6 M9.1 8.4 L11.1 12.3 L9.4 12 L8.5 13.6 L6.7 9.6" fill="none" stroke="#d8e4f0" stroke-width="1" stroke-linejoin="round"/></svg><svg class="a" style="left:48px;top:491.6px" width="14" height="13" viewBox="0 0 14 13"><rect x="0.5" y="6" width="2" height="6.5" fill="#d8e4f0"/><path d="M4 12 V6 L6.8 2.6 L7.3 0.8 C8.4 0.8 8.9 1.7 8.6 2.8 L8.1 4.8 H11.8 C12.6 4.8 13.1 5.4 12.9 6.2 L12 10.9 C11.8 11.6 11.3 12 10.7 12 Z" fill="none" stroke="#d8e4f0" stroke-width="1.1"/></svg><svg class="a" style="left:70px;top:491.6px" width="13" height="13" viewBox="0 0 13 13"><circle cx="6.2" cy="6.9" r="5.4" fill="none" stroke="#d8e4f0" stroke-width="1.1"/><rect x="5.6" y="3.8" width="1.2" height="4" fill="#d8e4f0"/><rect x="5.6" y="8.9" width="1.2" height="1.1" fill="#d8e4f0"/></svg><svg class="a" style="left:91px;top:491.6px" width="13" height="13" viewBox="0 0 13 13"><path d="M0.9 1.5 H11.6 V9 H3.8 L0.9 11.6 Z" fill="none" stroke="#d8e4f0" stroke-width="1.1" stroke-linejoin="round"/><rect x="2.9" y="3.3" width="6.8" height="2" fill="#d8e4f0"/><rect x="2.9" y="6.2" width="3.6" height="1" fill="#d8e4f0"/></svg>
<svg class="a" style="left:123px;top:491.5px" width="7" height="17" viewBox="0 0 7 17"><rect x="0.65" y="0.65" width="4.6" height="14.6" rx="1" fill="#fff" stroke="#4a8ad4" stroke-width="1.3"/><rect x="1.2" y="1.2" width="3.5" height="3.1" fill="#a9c6e6"/><path d="M0.65 4.7 H5.25" stroke="#4a8ad4" stroke-width="1"/></svg>
<svg class="a" style="left:28px;top:522.1px" width="12" height="14" viewBox="0 0 12 14"><path d="M6.00 1.20 Q7.22 0.66 8.00 1.74 Q9.32 1.88 9.46 3.20 Q10.54 3.98 10.00 5.20 Q10.54 6.42 9.46 7.20 Q9.32 8.52 8.00 8.66 Q7.22 9.74 6.00 9.20 Q4.78 9.74 4.00 8.66 Q2.68 8.52 2.54 7.20 Q1.46 6.42 2.00 5.20 Q1.46 3.98 2.54 3.20 Q2.68 1.88 4.00 1.74 Q4.78 0.66 6.00 1.20Z" fill="none" stroke="#d8e4f0" stroke-width="1"/><circle cx="6" cy="5.2" r="2.5" fill="none" stroke="#d8e4f0" stroke-width="1.1"/><path d="M2.9 8.4 L0.9 12.3 L2.6 12 L3.5 13.6 L5.3 9.6 M9.1 8.4 L11.1 12.3 L9.4 12 L8.5 13.6 L6.7 9.6" fill="none" stroke="#d8e4f0" stroke-width="1" stroke-linejoin="round"/></svg><svg class="a" style="left:48px;top:522.1px" width="14" height="13" viewBox="0 0 14 13"><rect x="0.5" y="6" width="2" height="6.5" fill="#d8e4f0"/><path d="M4 12 V6 L6.8 2.6 L7.3 0.8 C8.4 0.8 8.9 1.7 8.6 2.8 L8.1 4.8 H11.8 C12.6 4.8 13.1 5.4 12.9 6.2 L12 10.9 C11.8 11.6 11.3 12 10.7 12 Z" fill="none" stroke="#d8e4f0" stroke-width="1.1"/></svg><svg class="a" style="left:70px;top:522.1px" width="13" height="13" viewBox="0 0 13 13"><circle cx="6.2" cy="6.9" r="5.4" fill="none" stroke="#d8e4f0" stroke-width="1.1"/><rect x="5.6" y="3.8" width="1.2" height="4" fill="#d8e4f0"/><rect x="5.6" y="8.9" width="1.2" height="1.1" fill="#d8e4f0"/></svg><svg class="a" style="left:91px;top:522.1px" width="13" height="13" viewBox="0 0 13 13"><path d="M0.9 1.5 H11.6 V9 H3.8 L0.9 11.6 Z" fill="none" stroke="#d8e4f0" stroke-width="1.1" stroke-linejoin="round"/><rect x="2.9" y="3.3" width="6.8" height="2" fill="#d8e4f0"/><rect x="2.9" y="6.2" width="3.6" height="1" fill="#d8e4f0"/></svg>
<svg class="a" style="left:123px;top:522.0px" width="7" height="17" viewBox="0 0 7 17"><rect x="0.65" y="0.65" width="4.6" height="14.6" rx="1" fill="#fff" stroke="#4a8ad4" stroke-width="1.3"/><rect x="1.2" y="1.2" width="3.5" height="3.1" fill="#a9c6e6"/><path d="M0.65 4.7 H5.25" stroke="#4a8ad4" stroke-width="1"/></svg>
<div class="a" style="left:21px;top:547px;width:1018px;height:8px;background:#f1f1f1"></div>
<div class="a" style="left:21px;top:547px;width:936px;height:8px;background:#c1c1c1"></div>
<div class="h2" style="left:21px;top:586.5px">Data Sample</div>
<div class="a" style="left:118px;top:589.5px;font-size:12px;line-height:13px;font-weight:bold;color:#aaa;letter-spacing:-0.1px">1 - 3 of 10</div>
<svg class="a" style="left:1020px;top:587px" width="16" height="16" viewBox="0 0 16 16"><path d="M7.8 1.8 H1.8 V14.1 H14.2 V8.1" fill="none" stroke="#e6e6e6" stroke-width="1.3"/><path d="M10.1 1.8 H14.2 V5.7" fill="none" stroke="#e6e6e6" stroke-width="1.3"/><path d="M7.3 8.6 L13.8 2.1" fill="none" stroke="#e6e6e6" stroke-width="1.7"/></svg>
<div class="sep" style="left:21px;top:610px;width:1018px"></div>
<div class="dh" style="left:31px;top:625px">BusinessEnt…</div>
<div class="dh" style="left:131px;top:625px">SSN</div>
<div class="dh" style="left:231px;top:625px">NationalID…</div>
<div class="dh" style="left:331px;top:625px">LoginID</div>
<div class="dh" style="left:431px;top:625px">Organizatio…</div>
<div class="dh" style="left:531px;top:625px">Organizatio…</div>
<div class="dh" style="left:631px;top:625px">JobTitle</div>
<div class="dh" style="left:731px;top:625px">BirthDate</div>
<div class="dh" style="left:831px;top:625px">MaritalStatus</div>
<div class="dh" style="left:931px;top:625px">Gender</div>
<div class="dh" style="left:1030px;top:625px">..</div>
<div class="row" style="top:646px;height:29px"></div>
<div class="ds" style="right:1489px;top:654.0px">221</div>
<div class="ds" style="left:127px;top:654.0px;color:#aaa">987-65-4540</div>
<div class="ds" style="right:1289px;top:654.0px">260805477</div>
<div class="ds" style="left:327px;top:654.0px">adventure-w...</div>
<div class="ds" style="left:427px;top:654.0px">0x7B5B08</div>
<div class="ds" style="right:989px;top:654.0px">4</div>
<div class="ds" style="left:627px;top:654.0px">Control Speci...</div>
<div class="ds" style="left:727px;top:654.0px">6/26/1981</div>
<div class="ds" style="left:827px;top:654.0px">M</div>
<div class="ds" style="left:927px;top:654.0px">M</div>
<div class="ds" style="left:1027px;top:654.0px">...</div>
<div class="row g" style="top:675px;height:28px"></div>
<div class="ds" style="right:1489px;top:681.5px">64</div>
<div class="ds" style="left:127px;top:681.5px;color:#aaa">987-65-4383</div>
<div class="ds" style="right:1289px;top:681.5px">582347317</div>
<div class="ds" style="left:327px;top:681.5px">adventure-w...</div>
<div class="ds" style="left:427px;top:681.5px">0x7AE368</div>
<div class="ds" style="right:989px;top:681.5px">4</div>
<div class="ds" style="left:627px;top:681.5px">Production T...</div>
<div class="ds" style="left:727px;top:681.5px">10/7/1967</div>
<div class="ds" style="left:827px;top:681.5px">S</div>
<div class="ds" style="left:927px;top:681.5px">M</div>
<div class="ds" style="left:1027px;top:681.5px">...</div>
<div class="row" style="top:703px;height:29px"></div>
<div class="ds" style="right:1489px;top:710.0px">81</div>
<div class="ds" style="left:127px;top:710.0px;color:#aaa">987-65-4400</div>
<div class="ds" style="right:1289px;top:710.0px">413787783</div>
<div class="ds" style="left:327px;top:710.0px">adventure-w...</div>
<div class="ds" style="left:427px;top:710.0px">0x7AE778</div>
<div class="ds" style="right:989px;top:710.0px">4</div>
<div class="ds" style="left:627px;top:710.0px">Production T...</div>
<div class="ds" style="left:727px;top:710.0px">4/9/1965</div>
<div class="ds" style="left:827px;top:710.0px">S</div>
<div class="ds" style="left:927px;top:710.0px">M</div>
<div class="ds" style="left:1027px;top:710.0px">...</div>
<div class="a" style="left:21px;top:732px;width:1018px;height:8px;background:#f1f1f1"></div>
<div class="a" style="left:21px;top:732px;width:942px;height:8px;background:#c1c1c1"></div>
<div class="h2" style="left:1068px;top:99px">Labels</div>
<div class="sep" style="left:1068px;top:121px;width:494px"></div>
<div class="add" style="left:1068px;top:135px">add value</div>
<div class="h2" style="left:1068px;top:177px">Conditional Labels</div>
<div class="sep" style="left:1068px;top:199px;width:494px"></div>
<div class="a" style="left:1068px;top:210px;width:243px;height:19px;border:1px solid #d8e6f3;border-radius:2px;background:#eef4fb"></div>
<svg class="a" style="left:1077.5px;top:215.5px" width="11" height="10" viewBox="0 0 11 10"><circle cx="5.5" cy="2.8" r="2.8" fill="#f28705"/><path d="M0.3 9.5 C0.3 6.8 2.5 5.9 5.5 5.9 C8.5 5.9 10.7 6.8 10.7 9.5 Z" fill="#f28705"/></svg>
<div class="a" style="left:1096px;top:213px;font-size:13px;line-height:15px;color:#666;letter-spacing:-0.15px">Personal Identifiable Information (PII)</div>
<div class="h2" style="left:1068px;top:257px">Collections</div>
<div class="sep" style="left:1068px;top:279px;width:494px"></div>
<div class="add" style="left:1068px;top:293px">add value</div>
<div class="h2" style="left:1068px;top:335px">Data Classifications</div>
<div class="sep" style="left:1068px;top:357px;width:494px"></div>
<div class="rb" style="left:1068px;top:368px;width:29px">PII</div>
<div class="rb" style="left:1100px;top:368px;width:107px">PII Identification</div>
<div class="rb" style="left:1210px;top:368px;width:54px">PII SSN</div>
<div class="rb" style="left:1268px;top:368px;width:51px">Civility</div>
<div class="rb" style="left:1323px;top:368px;width:162px">US Social Security Number</div>
<div class="rb" style="left:1068px;top:391px;width:71px">Full Name</div>
<div class="rb" style="left:1142px;top:391px;width:54px">Gender</div>
<div class="h2" style="left:1068px;top:439px">Attributes</div>
<svg class="a" style="left:1548px;top:440px" width="6" height="14" viewBox="0 0 6 14"><circle cx="3" cy="2" r="1.6" fill="#aaa"/><circle cx="3" cy="7" r="1.6" fill="#aaa"/><circle cx="3" cy="12" r="1.6" fill="#aaa"/></svg>
<div class="sep" style="left:1068px;top:462px;width:494px"></div>
<div class="at" style="top:469px;height:29px"></div>
<div class="a" style="left:1074px;top:475.5px;font-size:13px;line-height:16px;color:#777;letter-spacing:-0.25px">Modification Time</div>
<svg class="a" style="left:1239px;top:476.5px" width="14" height="14" viewBox="0 0 14 14"><circle cx="7" cy="7" r="6" fill="none" stroke="#aaa" stroke-width="1.1"/><path d="M7 3.5 V7 L9.3 9" fill="none" stroke="#aaa" stroke-width="1.1"/></svg>
<div class="a" style="left:1259px;top:475.5px;font-size:13px;line-height:16px;color:#333">2019-04-25 10:24:30</div>
<div class="at g" style="top:498px;height:28px"></div>
<div class="a" style="left:1074px;top:504.0px;font-size:13px;line-height:16px;color:#777;letter-spacing:-0.25px">File Size</div>
<div class="a" style="left:1239px;top:504.0px;font-size:13px;line-height:16px;color:#333">48054</div>
<div class="at" style="top:526px;height:28px"></div>
<div class="a" style="left:1074px;top:531.5px;font-size:13px;line-height:16px;color:#777;letter-spacing:-0.25px">Type</div>
<div class="a" style="left:1239px;top:531.5px;font-size:13px;line-height:16px;color:#333">Csv</div>
<div class="at g" style="top:554px;height:28px"></div>
<div class="a" style="left:1074px;top:559.5px;font-size:13px;line-height:16px;color:#777;letter-spacing:-0.25px">Delimiter</div>
<div class="a" style="left:1239px;top:559.5px;font-size:13px;line-height:16px;color:#333">,</div>
<div class="at" style="top:582px;height:28px"></div>
<div class="a" style="left:1074px;top:587.5px;font-size:13px;line-height:16px;color:#777;letter-spacing:-0.25px">Model Name</div>
<div class="a" style="left:1239px;top:587.5px;font-size:13px;line-height:16px;color:#333">Employee.csv</div>
<div class="at g" style="top:610px;height:28px"></div>
<div class="a" style="left:1074px;top:615.5px;font-size:13px;line-height:16px;color:#777;letter-spacing:-0.25px">Has Semantic Usage</div>
<div class="a" style="left:1239px;top:615.5px;font-size:13px;line-height:16px;color:#333">False</div>
<div class="at" style="top:638px;height:28px"></div>
<div class="a" style="left:1074px;top:643.5px;font-size:13px;line-height:16px;color:#777;letter-spacing:-0.25px">Has Semantic Definition</div>
<div class="a" style="left:1239px;top:643.5px;font-size:13px;line-height:16px;color:#333">False</div>
<div class="at g" style="top:666px;height:29px"></div>
<div class="a" style="left:1074px;top:671.5px;font-size:13px;line-height:16px;color:#777;letter-spacing:-0.25px">Updated Date</div>
<svg class="a" style="left:1239px;top:672.5px" width="14" height="14" viewBox="0 0 14 14"><circle cx="7" cy="7" r="6" fill="none" stroke="#aaa" stroke-width="1.1"/><path d="M7 3.5 V7 L9.3 9" fill="none" stroke="#aaa" stroke-width="1.1"/></svg>
<div class="a" style="left:1259px;top:671.5px;font-size:13px;line-height:16px;color:#333">1 Day ago</div>
<div class="at" style="top:695px;height:29px"></div>
<div class="a" style="left:1074px;top:700.5px;font-size:13px;line-height:16px;color:#777;letter-spacing:-0.25px">Updated By</div>
<svg class="a" style="left:1239px;top:700.5px" width="16" height="16" viewBox="0 0 16 16"><circle cx="8" cy="8" r="7.2" fill="none" stroke="#3f82cf" stroke-width="1.2"/><circle cx="8" cy="6" r="2.6" fill="#3f82cf"/><path d="M3.6 12.6 C4.2 10.2 5.8 9.4 8 9.4 C10.2 9.4 11.8 10.2 12.4 12.6 C11.2 13.7 9.7 14.3 8 14.3 C6.3 14.3 4.8 13.7 3.6 12.6 Z" fill="#3f82cf"/></svg>
<div class="a" style="left:1260px;top:700.5px;font-size:13px;line-height:16px;color:#4a87cc">Administrator</div>
<div class="a" style="left:1583px;top:81px;width:17px;height:684px;background:#f1f1f1"></div>
<div class="a" style="left:1585px;top:98px;width:13px;height:583px;background:#c1c1c1"></div>
<div class="a" style="left:1588px;top:88px;width:0;height:0;border-left:4px solid transparent;border-right:4px solid transparent;border-bottom:4px solid #a3a3a3"></div>
<div class="a" style="left:1588px;top:753px;width:0;height:0;border-left:4px solid transparent;border-right:4px solid transparent;border-top:4px solid #505050"></div>
</body></html>
